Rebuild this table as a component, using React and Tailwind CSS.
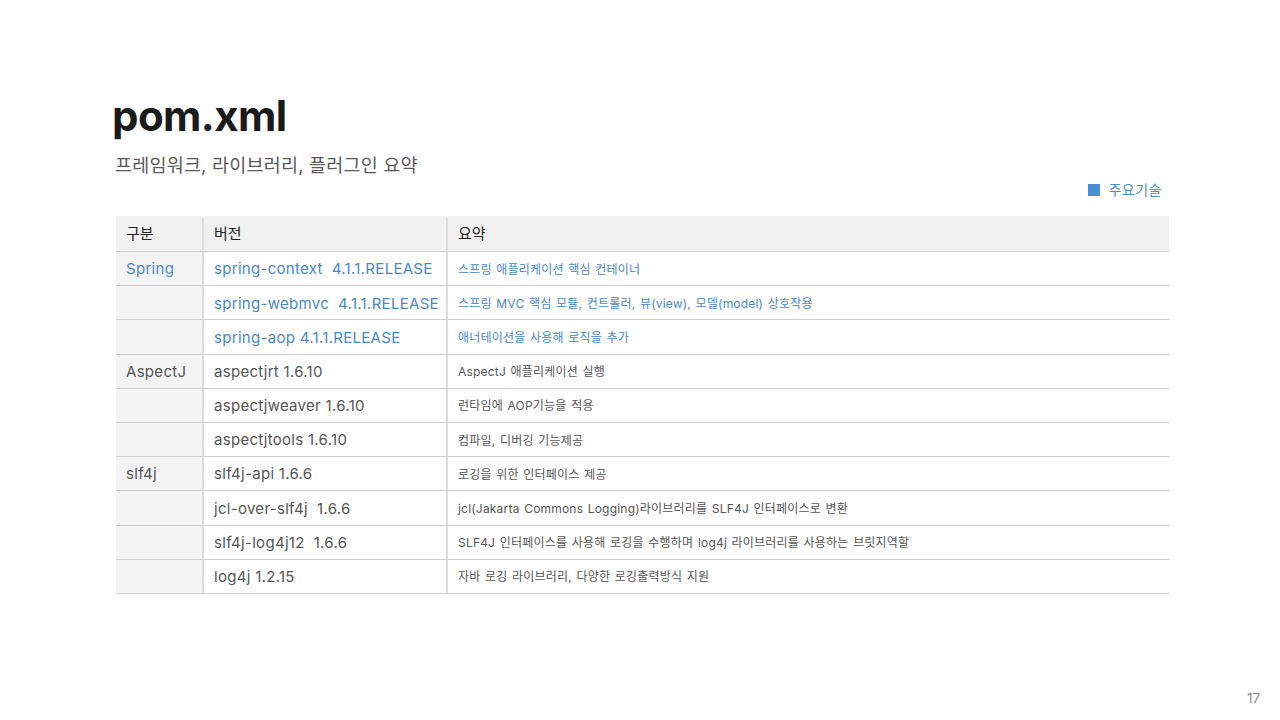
const rows = [
  { group: 'Spring', name: 'spring-context  4.1.1.RELEASE', desc: '스프링 애플리케이션 핵심 컨테이너', blue: true },
  { group: '', name: 'spring-webmvc  4.1.1.RELEASE', desc: '스프링 MVC 핵심 모듈, 컨트롤러, 뷰(view), 모델(model) 상호작용', blue: true },
  { group: '', name: 'spring-aop 4.1.1.RELEASE', desc: '애너테이션을 사용해 로직을 추가', blue: true },
  { group: 'AspectJ', name: 'aspectjrt 1.6.10', desc: 'AspectJ 애플리케이션 실행' },
  { group: '', name: 'aspectjweaver 1.6.10', desc: '런타임에 AOP기능을 적용' },
  { group: '', name: 'aspectjtools 1.6.10', desc: '컴파일, 디버깅 기능제공' },
  { group: 'slf4j', name: 'slf4j-api 1.6.6', desc: '로깅을 위한 인터페이스 제공' },
  { group: '', name: 'jcl-over-slf4j  1.6.6', desc: 'jcl(Jakarta Commons Logging)라이브러리를 SLF4J 인터페이스로 변환' },
  { group: '', name: 'slf4j-log4j12  1.6.6', desc: 'SLF4J 인터페이스를 사용해 로깅을 수행하며 log4j 라이브러리를 사용하는 브릿지역할' },
  { group: '', name: 'log4j 1.2.15', desc: '자바 로깅 라이브러리, 다양한 로깅출력방식 지원' },
];

export default function App() {
  return (
    <div
      className="w-[1280px] h-[720px] bg-white relative overflow-hidden"
      style={{ fontFamily: 'Inter, "Noto Sans CJK KR", sans-serif' }}
    >
      <div className="pl-[112px] pt-[88px]">
        <h1 className="text-[42px] leading-[56px] font-bold text-[#1a1a1a] tracking-[-0.6px]">pom.xml</h1>
        <p className="mt-[8px] ml-[3px] text-[18.5px] leading-[26px] text-[#5a5a5a] tracking-[0.2px]">프레임워크, 라이브러리, 플러그인 요약</p>
      </div>

      <div className="w-[1162px] flex justify-end items-center gap-[8px] mt-[2px] text-[14px] leading-[20px] text-[#4a8fd4] tracking-[0.5px]">
        <span className="w-[12px] h-[12px] bg-[#4a8fd4]" />
        <span>주요기술</span>
      </div>

      <div className="ml-[116px] mt-[16px] w-[1053px]">
        <div className="flex h-[36px] bg-[#f1f1f1] border-b border-[#cfcfcf] text-[15px] text-[#222] pt-[2px]">
          <div className="w-[88px] pl-[10px] flex items-center border-r-2 border-[#dcdcdc]">구분</div>
          <div className="w-[244px] pl-[10px] flex items-center border-r-2 border-[#dcdcdc]">버전</div>
          <div className="flex-1 pl-[10px] flex items-center">요약</div>
        </div>
        {rows.map((r, i) => (
          <div key={i} className="flex h-[34.2px] border-b border-[#cfcfcf]">
            <div className={`w-[88px] pl-[10px] pt-[2px] flex items-center bg-[#f4f4f4] border-r-2 border-[#dcdcdc] text-[15px] tracking-[0.3px] ${r.blue ? 'text-[#4a88cc]' : 'text-[#555]'}`}>{r.group}</div>
            <div className={`w-[244px] pl-[10px] pt-[2px] flex items-center border-r-2 border-[#dcdcdc] text-[15px] tracking-[0.3px] whitespace-pre ${r.blue ? 'text-[#4a88cc]' : 'text-[#555]'}`}>{r.name}</div>
            <div className={`flex-1 pl-[10px] pt-[2px] flex items-center text-[12px] tracking-[0.2px] [word-spacing:1px] ${r.blue ? 'text-[#4a88cc]' : 'text-[#555]'}`}>{r.desc}</div>
          </div>
        ))}
      </div>

      <div className="absolute right-[20px] bottom-[12px] text-[13px] text-[#888]">17</div>
    </div>
  );
}
